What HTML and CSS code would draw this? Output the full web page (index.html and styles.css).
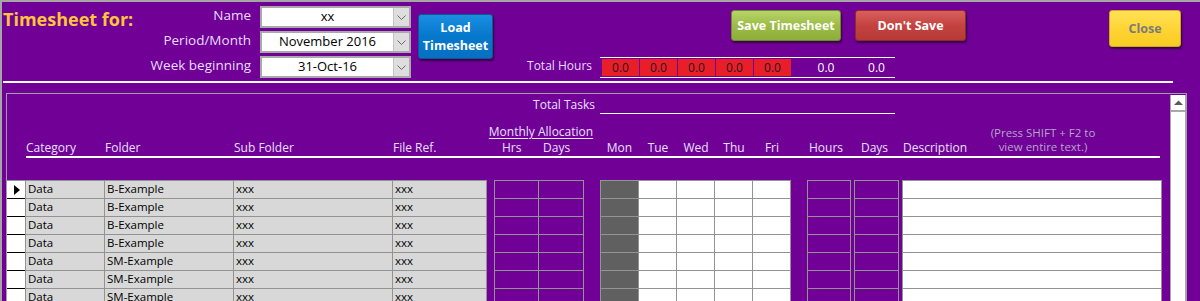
FILE: index.html
```html
<!DOCTYPE html>
<html>
<head>
<meta charset="utf-8">
<link rel="stylesheet" href="styles.css">
</head>
<body>
<div class="screen">
  <header class="top">
    <h1 class="title">Timesheet for:</h1>
    <div class="filters">
      <div class="flabel">Name</div>
      <div class="combo"><span class="cval">xx</span><span class="dd"><svg width="9" height="5" viewBox="0 0 9 5"><polyline points="0.5,0.5 4.5,4.5 8.5,0.5" fill="none" stroke="#6a6a6a" stroke-width="1"/></svg></span></div>
      <div class="flabel">Period/Month</div>
      <div class="combo"><span class="cval">November 2016</span><span class="dd"><svg width="9" height="5" viewBox="0 0 9 5"><polyline points="0.5,0.5 4.5,4.5 8.5,0.5" fill="none" stroke="#6a6a6a" stroke-width="1"/></svg></span></div>
      <div class="flabel">Week beginning</div>
      <div class="combo"><span class="cval">31-Oct-16</span><span class="dd"><svg width="9" height="5" viewBox="0 0 9 5"><polyline points="0.5,0.5 4.5,4.5 8.5,0.5" fill="none" stroke="#6a6a6a" stroke-width="1"/></svg></span></div>
    </div>
    <button class="btn load">Load<br>Timesheet</button>
    <div class="right">
      <div class="actions">
        <button class="btn save">Save Timesheet</button>
        <button class="btn dont">Don't Save</button>
        <button class="btn close">Close</button>
      </div>
      <div class="totals">
        <span class="tlabel">Total Hours</span>
        <div class="tbox">
          <span class="red">0.0</span><span class="red">0.0</span><span class="red">0.0</span><span class="red">0.0</span><span class="red">0.0</span>
          <span class="wt w1">0.0</span><span class="wt w2">0.0</span>
        </div>
      </div>
    </div>
  </header>
  <div class="divider"></div>
  <section class="subform">
    <div class="main">
      <div class="head grid">
        <div class="tt-label">Total Tasks</div>
        <div class="tt-line"></div>
        <div class="monthly"><span>Monthly Allocation</span></div>
        <div class="press"><div>(Press SHIFT + F2 to</div><div>view entire text.)</div></div>
        <div class="hl c2">Category</div>
        <div class="hl c3">Folder</div>
        <div class="hl c4">Sub Folder</div>
        <div class="hl c5">File Ref.</div>
        <div class="hl c7">Hrs</div>
        <div class="hl c8">Days</div>
        <div class="hl c10 ctr">Mon</div>
        <div class="hl c11 ctr">Tue</div>
        <div class="hl c12 ctr">Wed</div>
        <div class="hl c13 ctr">Thu</div>
        <div class="hl c14 ctr">Fri</div>
        <div class="hl c16 ctr">Hours</div>
        <div class="hl c18 ctr">Days</div>
        <div class="hl c20">Description</div>
        <div class="hline"></div>
      </div>
      <div class="rows">
        <div class="row grid first">
          <div class="sel current"></div><div class="cell txt gs">Data</div><div class="cell txt">B-Example</div><div class="cell txt">xxx</div><div class="cell txt">xxx</div><div></div><div class="cell gs"></div><div class="cell"></div><div></div><div class="cell gs mon"></div><div class="cell wh"></div><div class="cell wh"></div><div class="cell wh"></div><div class="cell wh"></div><div></div><div class="cell gs"></div><div></div><div class="cell gs"></div><div></div><div class="cell gs wh"></div>
        </div>
        <div class="row grid">
          <div class="sel"></div><div class="cell txt gs">Data</div><div class="cell txt">B-Example</div><div class="cell txt">xxx</div><div class="cell txt">xxx</div><div></div><div class="cell gs"></div><div class="cell"></div><div></div><div class="cell gs mon"></div><div class="cell wh"></div><div class="cell wh"></div><div class="cell wh"></div><div class="cell wh"></div><div></div><div class="cell gs"></div><div></div><div class="cell gs"></div><div></div><div class="cell gs wh"></div>
        </div>
        <div class="row grid">
          <div class="sel"></div><div class="cell txt gs">Data</div><div class="cell txt">B-Example</div><div class="cell txt">xxx</div><div class="cell txt">xxx</div><div></div><div class="cell gs"></div><div class="cell"></div><div></div><div class="cell gs mon"></div><div class="cell wh"></div><div class="cell wh"></div><div class="cell wh"></div><div class="cell wh"></div><div></div><div class="cell gs"></div><div></div><div class="cell gs"></div><div></div><div class="cell gs wh"></div>
        </div>
        <div class="row grid">
          <div class="sel"></div><div class="cell txt gs">Data</div><div class="cell txt">B-Example</div><div class="cell txt">xxx</div><div class="cell txt">xxx</div><div></div><div class="cell gs"></div><div class="cell"></div><div></div><div class="cell gs mon"></div><div class="cell wh"></div><div class="cell wh"></div><div class="cell wh"></div><div class="cell wh"></div><div></div><div class="cell gs"></div><div></div><div class="cell gs"></div><div></div><div class="cell gs wh"></div>
        </div>
        <div class="row grid">
          <div class="sel"></div><div class="cell txt gs">Data</div><div class="cell txt">SM-Example</div><div class="cell txt">xxx</div><div class="cell txt">xxx</div><div></div><div class="cell gs"></div><div class="cell"></div><div></div><div class="cell gs mon"></div><div class="cell wh"></div><div class="cell wh"></div><div class="cell wh"></div><div class="cell wh"></div><div></div><div class="cell gs"></div><div></div><div class="cell gs"></div><div></div><div class="cell gs wh"></div>
        </div>
        <div class="row grid">
          <div class="sel"></div><div class="cell txt gs">Data</div><div class="cell txt">SM-Example</div><div class="cell txt">xxx</div><div class="cell txt">xxx</div><div></div><div class="cell gs"></div><div class="cell"></div><div></div><div class="cell gs mon"></div><div class="cell wh"></div><div class="cell wh"></div><div class="cell wh"></div><div class="cell wh"></div><div></div><div class="cell gs"></div><div></div><div class="cell gs"></div><div></div><div class="cell gs wh"></div>
        </div>
        <div class="row grid">
          <div class="sel"></div><div class="cell txt gs">Data</div><div class="cell txt">SM-Example</div><div class="cell txt">xxx</div><div class="cell txt">xxx</div><div></div><div class="cell gs"></div><div class="cell"></div><div></div><div class="cell gs mon"></div><div class="cell wh"></div><div class="cell wh"></div><div class="cell wh"></div><div class="cell wh"></div><div></div><div class="cell gs"></div><div></div><div class="cell gs"></div><div></div><div class="cell gs wh"></div>
        </div>
      </div>
    </div>
    <div class="vscroll">
      <div class="up"><svg width="9" height="5" viewBox="0 0 9 5"><polygon points="0,5 4.5,0.5 9,5" fill="#5a5a5a"/></svg></div>
    </div>
  </section>
</div>
</body>
</html>
```

FILE: styles.css
```css
* { box-sizing: border-box; margin: 0; padding: 0; }

body {
  width: 1200px;
  height: 301px;
  overflow: hidden;
  background: #700096;
  font-family: "Open Sans", "Liberation Sans", sans-serif;
}

.screen {
  height: 301px;
  border-top: 2px solid #a6a6a6;
  border-left: 2px solid #a6a6a6;
}

/* ---------- top header ---------- */
.top {
  display: flex;
  align-items: flex-start;
  height: 77px;
}

.title {
  width: 127px;
  margin-left: 1px;
  margin-top: 5px;
  font-size: 18px;
  line-height: 24px;
  font-weight: 700;
  color: #ffc53a;
  white-space: nowrap;
}

.filters {
  display: grid;
  grid-template-columns: 121px 151px;
  grid-auto-rows: 22px;
  column-gap: 9px;
  row-gap: 3px;
  margin-top: 4px;
}

.flabel {
  text-align: right;
  font-size: 13.5px;
  line-height: 18px;
  color: #e6defc;
  white-space: nowrap;
}

.combo {
  display: flex;
  background: #fff;
  border: 2px solid #a9a9a9;
}

.cval {
  flex: 1;
  text-align: center;
  font-size: 13px;
  line-height: 16px;
  color: #000;
  white-space: nowrap;
}

.dd {
  width: 16px;
  background: #dedede;
  border-left: 1px solid #c4c4c4;
  display: flex;
  align-items: center;
  justify-content: center;
}

.btn {
  font-family: "Open Sans", "Liberation Sans", sans-serif;
  font-weight: 700;
  font-size: 12.5px;
  color: #fff;
  border-radius: 3px;
  text-align: center;
  box-shadow: 1px 2px 2px rgba(0, 0, 0, 0.5);
  white-space: nowrap;
}

.load {
  margin-left: 7px;
  margin-top: 12px;
  width: 75px;
  height: 45px;
  line-height: 18px;
  background: linear-gradient(#1a8ee0, #0678cc 50%, #0670c2);
  border: 1px solid #0b5896;
}

.right {
  display: flex;
  flex-direction: column;
  margin-top: 8px;
}

.actions {
  display: flex;
  align-items: flex-start;
  padding-left: 238px;
}

.save {
  width: 110px;
  height: 31px;
  background: linear-gradient(#b7d46a, #9cbc46 50%, #8eae3a);
  border: 1px solid #6e8a2a;
}

.dont {
  margin-left: 14px;
  width: 111px;
  height: 31px;
  background: linear-gradient(#d8605d, #c4423f 50%, #b63a37);
  border: 1px solid #8e2b29;
}

.close {
  margin-left: 143px;
  width: 72px;
  height: 37px;
  color: #7a7a7a;
  background: linear-gradient(#ffe156, #ffd535 50%, #f7cb22);
  border: 1px solid #d3a818;
}

.totals {
  display: flex;
  align-items: flex-start;
  margin-top: 10px;
}

.tlabel {
  width: 107px;
  padding-right: 8px;
  text-align: right;
  font-size: 12px;
  line-height: 17px;
  color: #e6defc;
  white-space: nowrap;
}

.tbox {
  display: flex;
  gap: 1px;
  width: 295px;
  height: 21px;
  border-top: 1px solid #fff;
  border-bottom: 1px solid #fff;
  padding: 1px 0 1px 2px;
}

.red {
  width: 37px;
  height: 17px;
  background: #e81f29;
  color: #2a1420;
  font-size: 12px;
  line-height: 17px;
  text-align: center;
}

.wt {
  height: 17px;
  color: #fff;
  font-size: 12px;
  line-height: 17px;
  text-align: center;
}

.w1 { width: 68px; }
.w2 { width: 31px; }

.divider {
  margin-top: 2px;
  margin-left: 1px;
  width: 1170px;
  height: 2px;
  background: #fff;
}

/* ---------- subform ---------- */
.subform {
  display: flex;
  margin-top: 10px;
  margin-left: 4px;
  width: 1181px;
  height: 220px;
  border: 1px solid #a0a0a0;
  border-bottom: none;
}

.main {
  flex: 1;
  min-width: 0;
}

.grid {
  display: grid;
  grid-template-columns: 18px 80px 129px 159px 94px 7px 45px 45px 16px 39px 38px 38px 38px 38px 16px 44px 3px 45px 3px 260px;
}

.head {
  grid-template-rows: 20px 26px 16px 2px;
  color: #e8e0fd;
  font-size: 12px;
}

.tt-label {
  grid-row: 1;
  grid-column: 1 / 10;
  text-align: right;
  padding-right: 5px;
  padding-top: 2px;
  line-height: 17px;
  align-self: start;
  white-space: nowrap;
}

.tt-line {
  grid-row: 1;
  grid-column: 10 / 19;
  margin-right: 4px;
  border-bottom: 1px solid #fff;
}

.monthly {
  grid-row: 2;
  grid-column: 7 / 9;
  display: flex;
  justify-content: center;
  align-items: flex-end;
  padding-left: 4px;
  padding-bottom: 1px;
  line-height: 15px;
  white-space: nowrap;
}

.monthly span {
  text-decoration: underline;
  text-underline-offset: 2px;
}

.press {
  grid-row: 2 / 4;
  grid-column: 20;
  align-self: end;
  display: flex;
  flex-direction: column;
  align-items: center;
  padding-left: 22px;
  padding-bottom: 2px;
  font-size: 11.5px;
  line-height: 14px;
  color: #b3a6c8;
  white-space: nowrap;
}

.hl {
  grid-row: 3;
  line-height: 16px;
  white-space: nowrap;
}

.c2 { grid-column: 2; padding-left: 1px; }
.c3 { grid-column: 3; }
.c4 { grid-column: 4; }
.c5 { grid-column: 5; }
.c7 { grid-column: 7; padding-left: 8px; }
.c8 { grid-column: 8; padding-left: 4px; }
.c10 { grid-column: 10; }
.c11 { grid-column: 11; }
.c12 { grid-column: 12; }
.c13 { grid-column: 13; }
.c14 { grid-column: 14; }
.c16 { grid-column: 16; padding-right: 6px; }
.c18 { grid-column: 18; padding-right: 4px; }
.c20 { grid-column: 20; padding-left: 1px; }
.ctr { text-align: center; }

.hline {
  grid-row: 4;
  grid-column: 2 / -1;
  margin-left: 1px;
  margin-right: 2px;
  background: #fff;
}

.rows {
  margin-top: 22px;
}

.row {
  height: 18px;
}

.row.first {
  height: 19px;
}

.sel {
  background: #fff;
  border-bottom: 1px solid #000;
  display: flex;
  align-items: center;
  justify-content: center;
}

.first .sel {
  border-top: 1px solid #939393;
}

.sel.current::before {
  content: "";
  width: 0;
  height: 0;
  margin-left: 1px;
  border-left: 6px solid #000;
  border-top: 5.5px solid transparent;
  border-bottom: 5.5px solid transparent;
}

.cell {
  border-right: 1px solid #939393;
  border-bottom: 1px solid #939393;
}

.first .cell {
  border-top: 1px solid #939393;
}

.cell.gs {
  border-left: 1px solid #939393;
}

.txt {
  background: #d8d8d8;
  color: #000;
  font-size: 11.5px;
  line-height: 15px;
  padding-left: 2px;
  white-space: nowrap;
  overflow: hidden;
}

.mon { background: #606060; }
.wh { background: #fff; }

/* ---------- scrollbar ---------- */
.vscroll {
  width: 16px;
  margin-top: 1px;
  background: #fff;
  border-left: 1px solid #a8a8a8;
  border-right: 1px solid #a8a8a8;
}

.up {
  height: 17px;
  border-bottom: 2px solid #a8a8a8;
  display: flex;
  align-items: center;
  justify-content: center;
}
```
